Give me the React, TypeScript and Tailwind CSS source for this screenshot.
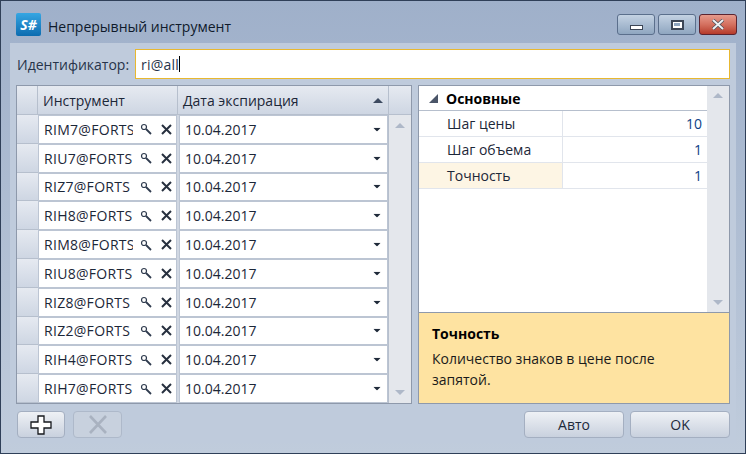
const instruments = [
  'RIM7@FORTS',
  'RIU7@FORTS',
  'RIZ7@FORTS',
  'RIH8@FORTS',
  'RIM8@FORTS',
  'RIU8@FORTS',
  'RIZ8@FORTS',
  'RIZ2@FORTS',
  'RIH4@FORTS',
  'RIH7@FORTS',
];

const properties = [
  { label: 'Шаг цены', value: '10' },
  { label: 'Шаг объема', value: '1' },
  { label: 'Точность', value: '1', selected: true },
];

const headerBg = 'bg-gradient-to-b from-[#e6eaf1] to-[#ced6e3]';

const SearchIcon = () => (
  <svg width="12" height="12" viewBox="0 0 12 12" fill="none" stroke="#2f3b4e">
    <circle cx="4" cy="4" r="2.5" strokeWidth="1.2" />
    <path d="M6 6l5 5" strokeWidth="1.8" />
  </svg>
);

const CrossIcon = () => (
  <svg width="11" height="11" viewBox="0 0 11 11" fill="none" stroke="#27303f" strokeWidth="2">
    <path d="M1 1l9 9M10 1l-9 9" />
  </svg>
);

const Triangle = ({ up, color, className }: { up?: boolean; color: string; className?: string }) => (
  <svg width="10" height="5" viewBox="0 0 10 5" fill={color} className={className}>
    <path d={up ? 'M5 0l5 5H0z' : 'M0 0h10L5 5z'} />
  </svg>
);

const TitleButton = ({ className, children }: { className: string; children: React.ReactNode }) => (
  <div className={`flex h-[21px] w-[38px] items-center justify-center rounded-[3px] border border-solid ${className}`}>
    {children}
  </div>
);

const Button = ({ children, className = '' }: { children: React.ReactNode; className?: string }) => (
  <div
    className={`flex h-[27px] items-center justify-center rounded-[4px] border border-[#a4afc1] bg-gradient-to-b from-[#eef1f5] to-[#c9d1de] text-[14px] text-[#1e2a3c] ${className}`}
  >
    {children}
  </div>
);

export default function App() {
  return (
    <div
      className="flex h-[454px] w-[746px] flex-col overflow-hidden border border-[#2f3f58] bg-gradient-to-b from-[#9fb0ca] to-[#c0ccdc] text-[14px] text-[#1c2738]"
      style={{ fontFamily: '"Open Sans", "Noto Sans", sans-serif' }}
    >
      <div className="flex h-[42px] shrink-0 items-center pl-[15px] pr-[8px] pt-[5px]">
        <div className="flex h-[23px] w-[25px] items-center justify-center rounded-[2px] bg-gradient-to-b from-[#35a6e3] to-[#0b6cb0] text-[14px] font-bold italic leading-none text-white">
          S#
        </div>
        <span className="ml-[7px] mt-[3px] text-[14px] text-[#0f1a2b]">Непрерывный инструмент</span>
        <div className="ml-auto flex gap-[3px]">
          <TitleButton className="border-[#5b6f8c] bg-gradient-to-b from-[#c4d2e3] to-[#8fa6c0]">
            <div className="mt-[5px] h-[5px] w-[13px] border border-[#3c4656] bg-white" />
          </TitleButton>
          <TitleButton className="border-[#5b6f8c] bg-gradient-to-b from-[#c4d2e3] to-[#8fa6c0]">
            <div className="flex h-[10px] w-[13px] items-center justify-center border-2 border-[#3c4656] bg-white">
              <div className="h-[3px] w-[6px] bg-[#8fa6c0]" />
            </div>
          </TitleButton>
          <TitleButton className="border-[#5c2430] bg-gradient-to-b from-[#e69a8c] via-[#d4705f] to-[#b53a2b]">
            <svg width="14" height="11" viewBox="0 0 14 11" fill="none" stroke="#4b4f58" strokeWidth="3.4">
              <path d="M2 1l10 9M12 1L2 10" />
              <path d="M2 1l10 9M12 1L2 10" stroke="#eef0f3" strokeWidth="2" />
            </svg>
          </TitleButton>
        </div>
      </div>

      <div className="mx-[9px] flex min-h-0 flex-1 flex-col bg-[#bfcbdc] px-[6px] pt-[6px]">
        <div className="flex h-[30px] shrink-0 items-center">
          <span className="pl-px text-[#27344a]">Идентификатор:</span>
          <div className="ml-[6px] flex h-[30px] flex-1 items-center border border-[#e8b830] bg-white pl-[5px]">
            <span className="tracking-[0.2px] text-[#27344a]">ri@all</span>
            <div className="h-[16px] w-px bg-black" />
          </div>
        </div>

        <div className="mt-[6px] flex h-[319px] shrink-0 gap-[6px]">
          <div className="flex w-[396px] border border-[#8e99ab] bg-[#d0d7e2]">
            <div className="flex w-[371px] flex-col">
              <div className={`flex h-[29px] shrink-0 border-b border-[#b6bfcd] ${headerBg}`}>
                <div className="w-[21px] border-r border-[#b6bfcd]" />
                <div className="flex w-[140px] items-center border-r border-[#b6bfcd] pl-[5px]">Инструмент</div>
                <div className="flex flex-1 items-center pl-[5px]">
                  Дата экспирация
                  <Triangle up color="#3d4a60" className="ml-auto mr-[5px]" />
                </div>
              </div>
              {instruments.map((instrument) => (
                <div key={instrument} className="flex h-[28.8px] shrink-0">
                  <div className={`w-[21px] border-b border-[#b6bfcd] ${headerBg}`} />
                  <div className="flex w-[139px] items-center border border-[#bcc5d3] bg-white pl-[5px]">
                    <span className="w-[89px] overflow-hidden whitespace-nowrap tracking-[0.3px]">{instrument}</span>
                    <span className="ml-[7px] flex"><SearchIcon /></span>
                    <span className="ml-[9px] flex"><CrossIcon /></span>
                  </div>
                  <div className="ml-[2px] flex flex-1 items-center border border-[#bcc5d3] bg-white pl-[5px]">
                    10.04.2017
                    <Triangle color="#1f2a3a" className="ml-auto mr-[5px] scale-75" />
                  </div>
                </div>
              ))}
            </div>
            <div className="flex flex-1 flex-col border-l border-[#b6bfcd]">
              <div className={`h-[29px] shrink-0 border-b border-[#b6bfcd] ${headerBg}`} />
              <div className="flex flex-1 flex-col items-center justify-between bg-[#e4e7ec] py-[8px]">
                <Triangle up color="#aeb8c8" />
                <Triangle color="#aeb8c8" />
              </div>
            </div>
          </div>

          <div className="flex flex-1 flex-col border border-[#8e99ab]">
            <div className="flex min-h-0 flex-1 bg-white">
              <div className="flex flex-1 flex-col">
                <div className="flex h-[25px] shrink-0 items-center border-b border-[#b6bfcd]">
                  <svg width="9" height="9" viewBox="0 0 9 9" className="ml-[10px]" fill="#4a5568">
                    <path d="M9 0v9H0z" />
                  </svg>
                  <span className="ml-[8px] font-bold text-black">Основные</span>
                </div>
                {properties.map((property) => (
                  <div key={property.label} className="flex h-[26px] shrink-0 border-b border-[#e1e5ec]">
                    <div
                      className={`flex w-[144px] items-center border-r border-[#e1e5ec] pl-[28px] ${property.selected ? 'bg-[#fdf5e4]' : ''}`}
                    >
                      {property.label}
                    </div>
                    <div className="flex flex-1 items-center justify-end pr-[5px] text-[#0c3f86]">{property.value}</div>
                  </div>
                ))}
              </div>
              <div className="flex w-[22px] flex-col items-center justify-between bg-[#e4e7ec] py-[7px]">
                <Triangle up color="#aeb8c8" />
                <Triangle color="#aeb8c8" />
              </div>
            </div>
            <div className="h-[91px] shrink-0 border-t border-[#8e99ab] bg-[#fee3a1] pl-[13px] pt-[10px] text-[#1a1a1a]">
              <div className="font-bold leading-[21px] text-black">Точность</div>
              <div className="mt-[4px] w-[260px] leading-[21px]">Количество знаков в цене после запятой.</div>
            </div>
          </div>
        </div>

        <div className="mt-[7px] flex items-start">
          <Button className="ml-px w-[48px]">
            <svg width="22" height="20" viewBox="0 0 22 20" fill="#fff" stroke="#16181c" strokeWidth="1.3">
              <path d="M8 1h6v6h7v6h-7v6H8v-6H1V7h7z" />
            </svg>
          </Button>
          <div className="ml-[8px] flex h-[27px] w-[49px] items-center justify-center rounded-[4px] border border-[#aeb9ca] bg-[#c8d1de]">
            <svg width="20" height="19" viewBox="0 0 20 19" fill="none" stroke="#a9b2c0" strokeWidth="2.6">
              <path d="M2 1l16 17M18 1L2 18" />
            </svg>
          </div>
          <Button className="ml-auto w-[100px]">Авто</Button>
          <Button className="ml-[6px] w-[100px]">OK</Button>
        </div>
      </div>
      <div className="h-[10px] shrink-0" />
    </div>
  );
}
